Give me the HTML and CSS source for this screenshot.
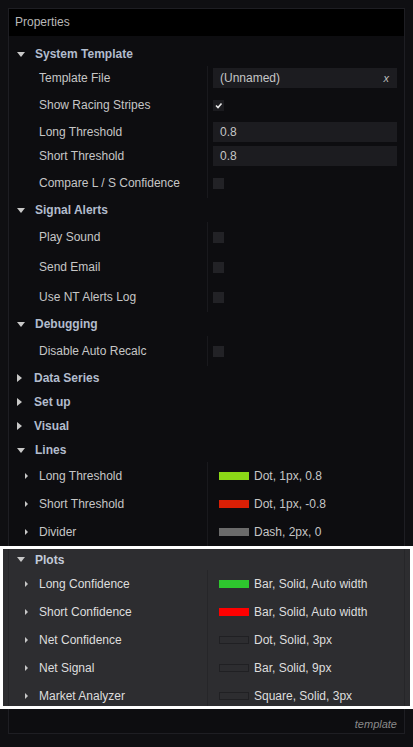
FILE: index.html
```html
<!DOCTYPE html>
<html lang="en">
<head>
  <meta charset="UTF-8">
  <meta name="viewport" content="width=device-width, initial-scale=1.0">
  <title>Properties</title>
  <link rel="stylesheet" href="styles.css">
</head>
<body>
  <div class="panel">
    <div class="panel-title">Properties</div>

    <div class="list">
      <!-- System Template -->
      <div class="group-head"><span class="caret down"></span>System Template</div>
      <div class="prop h24">
        <div class="name">Template File</div>
        <div class="val"><div class="field">(Unnamed)<i class="clear">x</i></div></div>
      </div>
      <div class="prop">
        <div class="name">Show Racing Stripes</div>
        <div class="val">
          <svg class="check" width="11" height="11" viewBox="0 0 11 11">
            <rect width="11" height="11" fill="#1b1b1f"/>
            <polyline points="3,5.5 5,7.5 8.5,3.5" fill="none" stroke="#e8e8e8" stroke-width="1.6"/>
          </svg>
        </div>
      </div>
      <div class="prop h24">
        <div class="name">Long Threshold</div>
        <div class="val"><div class="field">0.8</div></div>
      </div>
      <div class="prop h24">
        <div class="name">Short Threshold</div>
        <div class="val"><div class="field">0.8</div></div>
      </div>
      <div class="prop">
        <div class="name">Compare L / S Confidence</div>
        <div class="val"><span class="box"></span></div>
      </div>

      <!-- Signal Alerts -->
      <div class="group-head"><span class="caret down"></span>Signal Alerts</div>
      <div class="prop">
        <div class="name">Play Sound</div>
        <div class="val"><span class="box"></span></div>
      </div>
      <div class="prop">
        <div class="name">Send Email</div>
        <div class="val"><span class="box"></span></div>
      </div>
      <div class="prop">
        <div class="name">Use NT Alerts Log</div>
        <div class="val"><span class="box"></span></div>
      </div>

      <!-- Debugging -->
      <div class="group-head"><span class="caret down"></span>Debugging</div>
      <div class="prop">
        <div class="name">Disable Auto Recalc</div>
        <div class="val"><span class="box"></span></div>
      </div>

      <div class="group-head"><span class="caret right"></span>Data Series</div>
      <div class="group-head"><span class="caret right"></span>Set up</div>
      <div class="group-head"><span class="caret right"></span>Visual</div>

      <!-- Lines -->
      <div class="group-head"><span class="caret down"></span>Lines</div>
      <div class="prop sub">
        <div class="name"><span class="caret small"></span>Long Threshold</div>
        <div class="val"><span class="swatch lime"></span>Dot, 1px, 0.8</div>
      </div>
      <div class="prop sub">
        <div class="name"><span class="caret small"></span>Short Threshold</div>
        <div class="val"><span class="swatch red"></span>Dot, 1px, -0.8</div>
      </div>
      <div class="prop sub">
        <div class="name"><span class="caret small"></span>Divider</div>
        <div class="val"><span class="swatch gray"></span>Dash, 2px, 0</div>
      </div>

      <!-- Plots (highlighted) -->
      <div class="plots">
        <div class="plots-inner">
          <div class="group-head plots-head"><span class="caret down"></span>Plots</div>
          <div class="prop sub">
            <div class="name"><span class="caret small"></span>Long Confidence</div>
            <div class="val"><span class="swatch green"></span>Bar, Solid, Auto width</div>
          </div>
          <div class="prop sub">
            <div class="name"><span class="caret small"></span>Short Confidence</div>
            <div class="val"><span class="swatch bright-red"></span>Bar, Solid, Auto width</div>
          </div>
          <div class="prop sub">
            <div class="name"><span class="caret small"></span>Net Confidence</div>
            <div class="val"><span class="swatch empty"></span>Dot, Solid, 3px</div>
          </div>
          <div class="prop sub">
            <div class="name"><span class="caret small"></span>Net Signal</div>
            <div class="val"><span class="swatch empty"></span>Bar, Solid, 9px</div>
          </div>
          <div class="prop sub">
            <div class="name"><span class="caret small"></span>Market Analyzer</div>
            <div class="val"><span class="swatch empty"></span>Square, Solid, 3px</div>
          </div>
        </div>
      </div>
    </div>

    <div class="panel-foot">template</div>
  </div>
</body>
</html>
```

FILE: styles.css
```css
* {
  box-sizing: border-box;
}
body {
  margin: 0;
  background-color: #0f0f12;
  font-family: "Liberation Sans", Arial, sans-serif;
  font-size: 12px;
  color: #c6c6c6;
}
.panel {
  margin: 8px 8px 0;
  border: 1px solid #1e1e23;
  background-color: #0d0d10;
}
.panel-title {
  height: 27px;
  line-height: 27px;
  padding-left: 6px;
  background-color: #000;
  color: #b8b8b8;
}
.list {
  padding-top: 6px;
}
.group-head {
  display: flex;
  align-items: center;
  height: 24px;
  font-weight: bold;
  color: #b2bccd;
}
.caret {
  width: 0;
  height: 0;
  flex-shrink: 0;
}
.caret.down {
  margin: 0 10px 0 8px;
  border-left: 4px solid transparent;
  border-right: 4px solid transparent;
  border-top: 5px solid #c8c8c8;
}
.caret.right {
  margin: 0 12px 0 8px;
  border-top: 4px solid transparent;
  border-bottom: 4px solid transparent;
  border-left: 5px solid #c8c8c8;
}
.caret.small {
  margin-right: 11px;
  border-top: 3px solid transparent;
  border-bottom: 3px solid transparent;
  border-left: 3px solid #c8c8c8;
}
.prop {
  display: flex;
  height: 30px;
}
.prop.h24 {
  height: 24px;
}
.prop.sub {
  height: 28px;
}
.name {
  width: 198px;
  padding-left: 30px;
  display: flex;
  align-items: center;
  white-space: nowrap;
}
.prop.sub .name {
  padding-left: 16px;
}
.val {
  flex: 1;
  display: flex;
  align-items: center;
  padding: 0 7px 0 5px;
  border-left: 1px solid #19191d;
  white-space: nowrap;
}
.field {
  flex: 1;
  height: 20px;
  display: flex;
  align-items: center;
  justify-content: space-between;
  padding: 0 8px 0 7px;
  background-color: #1c1c20;
}
.clear {
  font-size: 11px;
  color: #bdbdbd;
}
.box {
  width: 11px;
  height: 11px;
  background-color: #222226;
}
.check {
  display: block;
}
.swatch {
  width: 30px;
  height: 8px;
  margin: 0 5px 0 6px;
  flex-shrink: 0;
}
.swatch.lime { background-color: #8bd817; }
.swatch.red { background-color: #d91f05; }
.swatch.gray { background-color: #6b6b6b; }
.swatch.green { background-color: #2ec72e; }
.swatch.bright-red { background-color: #ff0000; }
.swatch.empty {
  border: 1px solid #202023;
}

/* highlighted plots block */
.plots {
  margin: 0 -9px;
  height: 163px;
  padding: 0 5px;
  border: 3px solid #fff;
  background-color: #2d2d30;
  overflow: hidden;
}
.plots-inner {
  border-left: 1px solid #262629;
  border-right: 1px solid #262629;
  height: 100%;
}
.plots-head {
  height: 21px;
  color: #c2cad8;
}
.plots .name {
  color: #dedede;
}
.plots .val {
  color: #dedede;
  border-left-color: #262629;
}

.panel-foot {
  height: 24px;
  display: flex;
  align-items: flex-end;
  justify-content: flex-end;
  padding: 0 7px 3px 0;
  font-style: italic;
  font-size: 11px;
  color: #8a8a8a;
}
```
